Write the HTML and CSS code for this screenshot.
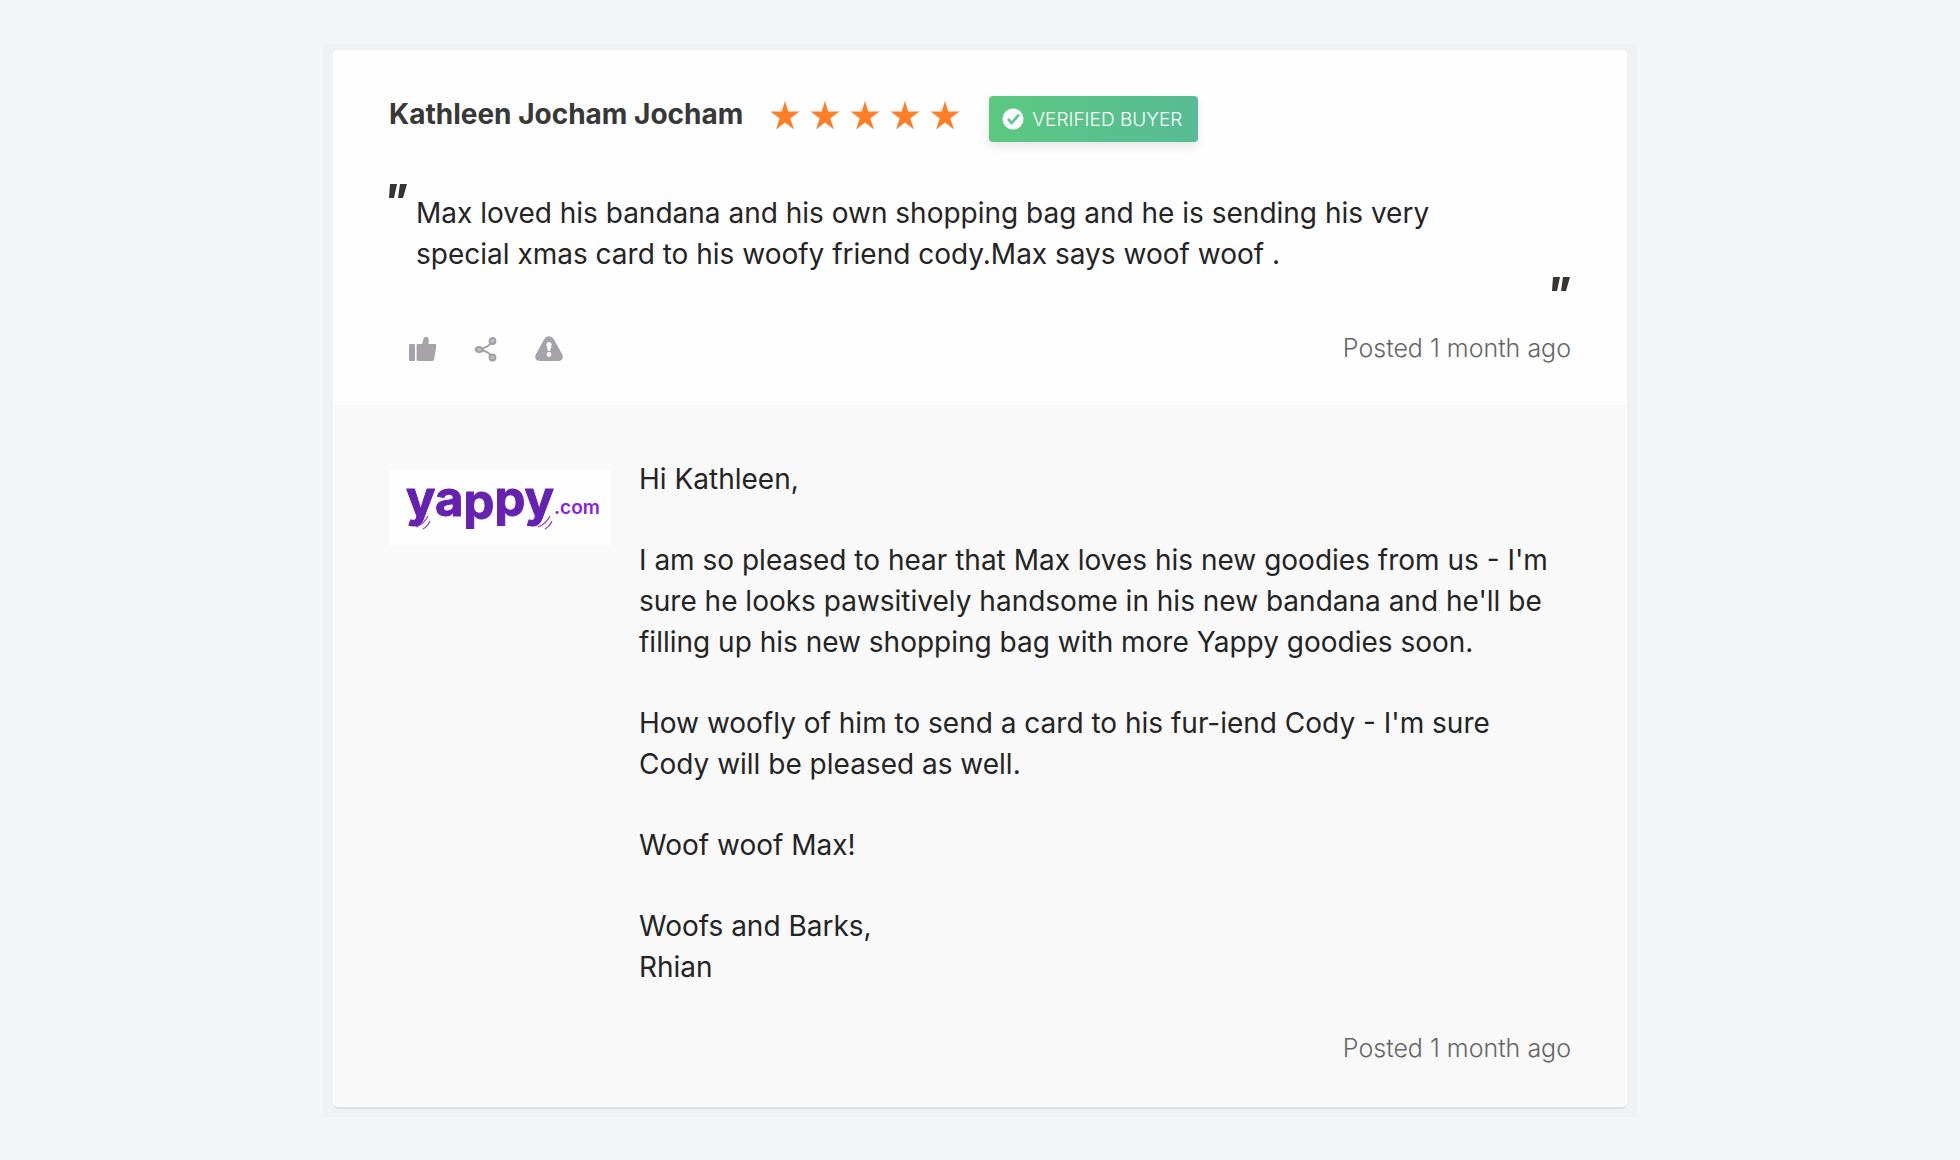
FILE: index.html
```html
<!DOCTYPE html>
<html lang="en">
<head>
  <meta charset="UTF-8">
  <meta name="viewport" content="width=device-width, initial-scale=1.0">
  <title>Customer review</title>
  <link rel="stylesheet" href="styles.css">
</head>
<body>
  <main class="frame">
    <article class="card">
      <section class="review">
        <header class="review-header">
          <h1 class="name">Kathleen Jocham Jocham</h1>
          <svg class="stars" viewBox="0 0 190 30" role="img" aria-label="5 out of 5 stars">
            <defs>
              <path id="star" d="M14 0l3.3 10.6H28.400l-9 6.600 3.500 11.300-8.900-7-8.900 7 3.500-11.300-9-6.600h11.100z"/>
            </defs>
            <use href="#star" x="0"/>
            <use href="#star" x="40"/>
            <use href="#star" x="80"/>
            <use href="#star" x="120"/>
            <use href="#star" x="160"/>
          </svg>
          <span class="badge">
            <svg class="check" viewBox="0 0 22 22" aria-hidden="true">
              <circle cx="11" cy="11" r="10.500" fill="#fff"/>
              <path d="M6 11l3.700 4L17 6.500" fill="none" stroke="#5ac68a" stroke-width="2.600"/>
            </svg>
            VERIFIED BUYER
          </span>
        </header>

        <blockquote class="quote">
          <svg class="mark" viewBox="0 0 19 15" aria-hidden="true"><path d="M1 0h7L5 14H0zM11 0h7l-4 14H9z"/></svg>
          <p>Max loved his bandana and his own shopping bag and he is sending his very special xmas card to his woofy friend cody.Max says woof woof .</p>
          <svg class="mark mark-end" viewBox="0 0 19 15" aria-hidden="true"><path d="M1 0h7L5 14H0zM11 0h7l-4 14H9z"/></svg>
        </blockquote>

        <footer class="review-footer">
          <div class="actions">
            <button type="button" aria-label="Helpful">
              <svg viewBox="0 0 28 26">
                <path d="M1 8h4q1 0 1 1v15q0 1-1 1H1q-1 0-1-1V9q0-1 1-1zM8 8h5c.5-2 1-2.500 1.300-4.500C14.800-.3 19.500.2 19.700 3.500c.1 2-.2 3-.2 4.500H26c1.200 0 1.500 1 1.300 2l-2 12.500c-.4 2-1 2.500-2.500 2.500H9c-1 0-1.400-.6-1.400-1.500V9z"/>
              </svg>
            </button>
            <button type="button" aria-label="Share">
              <svg viewBox="0 0 28 26">
                <g fill="#bdbac0" stroke="#a09ea4" stroke-width="1.800">
                  <path d="M20 5q-2 6-13 8.500 11 2 13 8" fill="none"/>
                  <ellipse cx="7" cy="13.500" rx="3.300" ry="2.600"/>
                  <circle cx="20.500" cy="5" r="3"/>
                  <circle cx="20.500" cy="21.500" r="3"/>
                </g>
              </svg>
            </button>
            <button type="button" aria-label="Report">
              <svg viewBox="0 0 28 26">
                <path d="M9 3.500c2.500-4.500 7.500-4.500 10 0l8 14.500c2 4 0 7-4 7H5c-4 0-6-3-4-7z"/>
                <path d="M11.300 9c0-4 5.400-4 5.400 0L15 15h-2z" fill="#fff"/>
                <circle cx="14" cy="18.500" r="2.400" fill="#fff"/>
              </svg>
            </button>
          </div>
          <time class="posted">Posted 1 month ago</time>
        </footer>
      </section>

      <section class="reply">
        <div class="reply-body">
          <div class="logo">
            <svg viewBox="0 0 222 75" role="img" aria-label="yappy.com">
              <text class="logo-name" x="17" y="46">ya<tspan dy="3">p</tspan><tspan dy="-3">py</tspan></text>
              <text class="logo-tld" x="165" y="44">.com</text>
              <g fill="none" stroke="#8d3fb8" stroke-width="1.200">
                <path d="M27 57q8-3 12-11M34 59q5-3 7-8M149 57q8-3 12-11M156 59q5-3 7-8"/>
              </g>
            </svg>
          </div>
          <div class="message">
            <p>Hi Kathleen,</p>
            <p>I am so pleased to hear that Max loves his new goodies from us - I'm sure he looks pawsitively handsome in his new bandana and he'll be filling up his new shopping bag with more Yappy goodies soon.</p>
            <p>How woofly of him to send a card to his fur-iend Cody - I'm sure Cody will be pleased as well.</p>
            <p>Woof woof Max!</p>
            <p>Woofs and Barks,<br>Rhian</p>
          </div>
        </div>
        <time class="posted">Posted 1 month ago</time>
      </section>
    </article>
  </main>
</body>
</html>
```
FILE: styles.css
```css
* {
  box-sizing: border-box;
}
body {
  margin: 0;
  padding: 44px 24px;
  background: #f3f5f7;
  color: #242424;
  font-family: Inter, "Liberation Sans", sans-serif;
  font-size: 28px;
  line-height: 41px;
}
h1, p, blockquote {
  margin: 0;
}
.frame {
  max-width: 1314px;
  margin: 0 auto;
  padding: 6px 10px 8px;
  background: #eff1f3;
}
.card {
  overflow: hidden;
  border-bottom: 2px solid #dfe1e2;
  border-radius: 5px;
  background: #f9f9f9;
}
.review {
  padding: 46px 56px 36px;
  background: #fefefe;
}
.review-header {
  display: flex;
  align-items: flex-start;
  gap: 28px;
}
.name {
  color: #383838;
  font-size: 28px;
  font-weight: 700;
  line-height: 36px;
}
.stars {
  width: 190px;
  height: 30px;
  margin-top: 5px;
  fill: #ff7f27;
}
.badge {
  display: flex;
  align-items: center;
  gap: 8px;
  height: 46px;
  padding: 0 16px 0 13px;
  border-radius: 4px;
  background: linear-gradient(100deg, #5bc97f, #57bb96);
  box-shadow: 0 4px 10px rgba(0, 0, 0, 0.1);
  color: #fff;
  font-size: 19px;
  font-weight: 300;
}
.check {
  width: 22px;
  height: 22px;
}
.quote {
  display: grid;
  grid-template-columns: 19px 1fr 19px;
  column-gap: 8px;
  padding-top: 42px;
}
.quote p {
  padding: 9px 80px 17px 0;
}
.mark {
  width: 19px;
  height: 15px;
  fill: #383434;
}
.mark-end {
  align-self: end;
}
.review-footer {
  display: flex;
  align-items: center;
  justify-content: space-between;
  padding-top: 36px;
}
.actions {
  display: flex;
  gap: 35px;
  padding-left: 20px;
}
.actions button {
  width: 28px;
  height: 26px;
  padding: 0;
  border: 0;
  background: none;
  cursor: pointer;
}
.actions svg {
  display: block;
  fill: #a5a3a9;
}
.posted {
  color: #666;
  font-size: 25px;
  font-weight: 300;
}
.reply {
  display: flex;
  flex-direction: column;
  gap: 40px;
  padding: 54px 56px 38px;
}
.reply-body {
  display: flex;
  gap: 28px;
}
.logo {
  flex: 0 0 222px;
  padding-top: 11px;
}
.logo svg {
  display: block;
  background: #fefefe;
}
.logo-name {
  fill: #6521b0;
  stroke: #6521b0;
  stroke-width: 1;
  stroke-linejoin: round;
  font-size: 49px;
  font-weight: 700;
}
.logo-tld {
  fill: #8423e0;
  font-size: 19px;
  font-weight: 600;
}
.message {
  display: flex;
  flex: 1;
  flex-direction: column;
  gap: 40px;
  padding-right: 8px;
}
.reply .posted {
  align-self: flex-end;
}
```
